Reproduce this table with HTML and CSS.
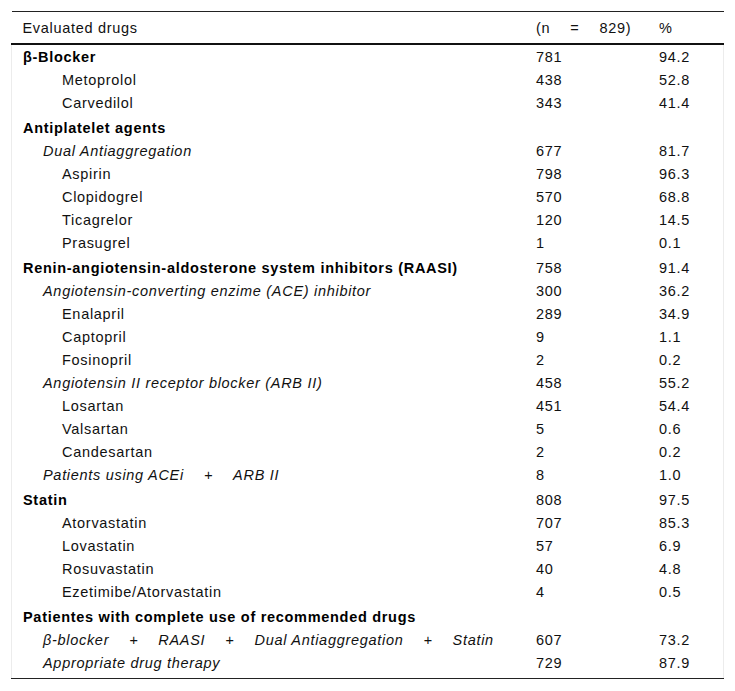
FILE: index.html
```html
<!DOCTYPE html>
<html>
<head>
<meta charset="utf-8">
<link rel="stylesheet" href="styles.css">
</head>
<body>
<div class="wrap">
<table class="drugs">
  <colgroup>
    <col class="c1"><col class="c2"><col class="c3">
  </colgroup>
  <thead>
    <tr><th>Evaluated drugs</th><th>(n<span class="sp"></span>=<span class="sp"></span>829)</th><th>%</th></tr>
  </thead>
  <tbody>
    <tr class="grp first"><td class="l0">β-Blocker</td><td>781</td><td>94.2</td></tr>
    <tr><td class="l2">Metoprolol</td><td>438</td><td>52.8</td></tr>
    <tr><td class="l2">Carvedilol</td><td>343</td><td>41.4</td></tr>
    <tr class="grp"><td class="l0">Antiplatelet agents</td><td></td><td></td></tr>
    <tr><td class="l1">Dual Antiaggregation</td><td>677</td><td>81.7</td></tr>
    <tr><td class="l2">Aspirin</td><td>798</td><td>96.3</td></tr>
    <tr><td class="l2">Clopidogrel</td><td>570</td><td>68.8</td></tr>
    <tr><td class="l2">Ticagrelor</td><td>120</td><td>14.5</td></tr>
    <tr><td class="l2">Prasugrel</td><td>1</td><td>0.1</td></tr>
    <tr class="grp"><td class="l0">Renin-angiotensin-aldosterone system inhibitors (RAASI)</td><td>758</td><td>91.4</td></tr>
    <tr><td class="l1">Angiotensin-converting enzime (ACE) inhibitor</td><td>300</td><td>36.2</td></tr>
    <tr><td class="l2">Enalapril</td><td>289</td><td>34.9</td></tr>
    <tr><td class="l2">Captopril</td><td>9</td><td>1.1</td></tr>
    <tr><td class="l2">Fosinopril</td><td>2</td><td>0.2</td></tr>
    <tr><td class="l1">Angiotensin II receptor blocker (ARB II)</td><td>458</td><td>55.2</td></tr>
    <tr><td class="l2">Losartan</td><td>451</td><td>54.4</td></tr>
    <tr><td class="l2">Valsartan</td><td>5</td><td>0.6</td></tr>
    <tr><td class="l2">Candesartan</td><td>2</td><td>0.2</td></tr>
    <tr><td class="l1">Patients using ACEi<span class="sp"></span>+<span class="sp"></span>ARB II</td><td>8</td><td>1.0</td></tr>
    <tr class="grp"><td class="l0">Statin</td><td>808</td><td>97.5</td></tr>
    <tr><td class="l2">Atorvastatin</td><td>707</td><td>85.3</td></tr>
    <tr><td class="l2">Lovastatin</td><td>57</td><td>6.9</td></tr>
    <tr><td class="l2">Rosuvastatin</td><td>40</td><td>4.8</td></tr>
    <tr><td class="l2">Ezetimibe/Atorvastatin</td><td>4</td><td>0.5</td></tr>
    <tr class="grp"><td class="l0">Patientes with complete use of recommended drugs</td><td></td><td></td></tr>
    <tr><td class="l1">β-blocker<span class="sp"></span>+<span class="sp"></span>RAASI<span class="sp"></span>+<span class="sp"></span>Dual Antiaggregation<span class="sp"></span>+<span class="sp"></span>Statin</td><td>607</td><td>73.2</td></tr>
    <tr class="last"><td class="l1">Appropriate drug therapy</td><td>729</td><td>87.9</td></tr>
  </tbody>
</table>
</div>
</body>
</html>
```

FILE: styles.css
```css
html, body {
  margin: 0;
  padding: 0;
  background: #fff;
}
.wrap {
  padding: 11px 11px 0 11px;
}
.drugs {
  width: 713px;
  border-collapse: collapse;
  font-family: "Liberation Sans", Arial, sans-serif;
  font-size: 14.5px;
  line-height: 16px;
  color: #111;
  letter-spacing: 0.7px;
}
.c1 { width: 514px; }
.c2 { width: 123px; }
.c3 { width: 76px; }
.drugs th {
  font-weight: normal;
  text-align: left;
  padding: 8px 11px 7px 11px;
  border-top: 1px solid #222;
  border-bottom: 2px solid #111;
  white-space: nowrap;
}
.drugs td {
  padding: 3.5px 11px;
  text-align: left;
  white-space: nowrap;
}
.drugs tbody td:first-child { border-left: 1px solid #ececec; }
.drugs tbody td:last-child { border-right: 1px solid #ececec; }
.grp td { padding-top: 5.5px; }
.grp.first td { padding-top: 3.5px; }
.grp .l0 { font-weight: bold; color: #000; }
.l1 { font-style: italic; }
.drugs td.l1 { padding-left: 31px; }
.drugs td.l2 { padding-left: 50px; }
.last td {
  padding-bottom: 7.5px;
  border-bottom: 1px solid #222;
}
.sp {
  display: inline-block;
  width: 20px;
}
```
